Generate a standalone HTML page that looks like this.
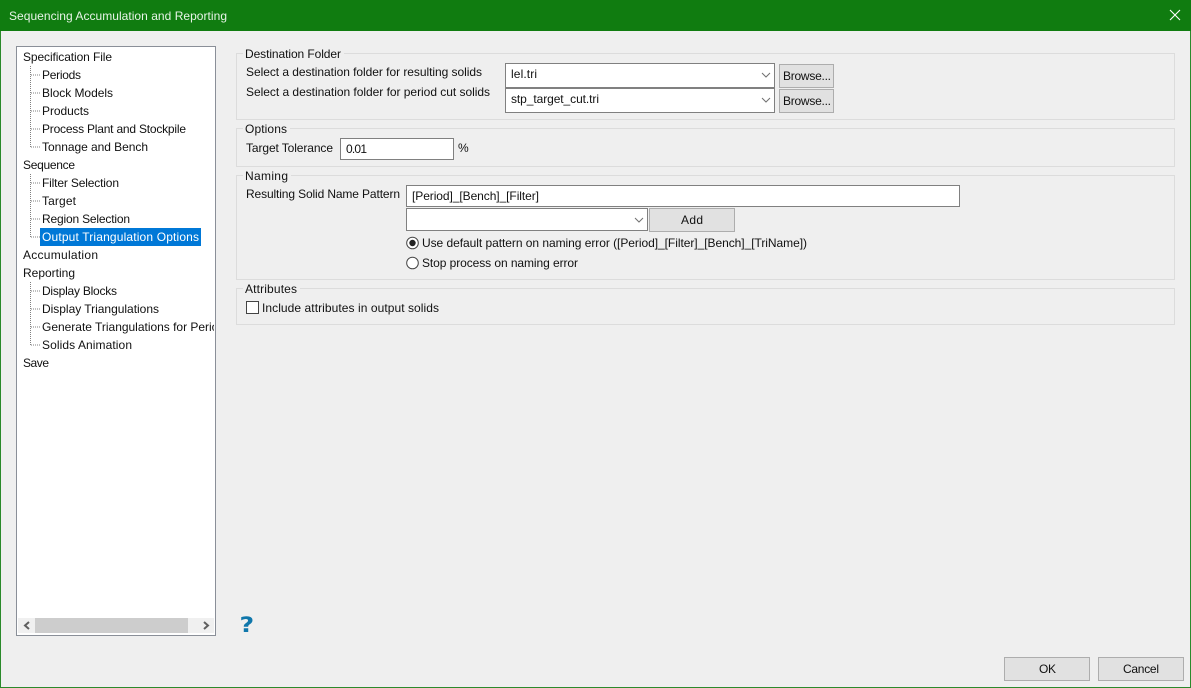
<!DOCTYPE html>
<html><head><meta charset="utf-8"><title>Sequencing Accumulation and Reporting</title>
<style>
html,body{margin:0;padding:0;background:#efefef;width:1191px;height:688px;overflow:hidden}
svg{display:block}
text{font-family:"Liberation Sans",sans-serif;font-size:12px;fill:#111;white-space:pre}
.f{fill:none;stroke:#dcdcdc;stroke-width:1}
.b{fill:#fff;stroke:#808080;stroke-width:1}
.btn{fill:#e1e1e1;stroke:#adadad;stroke-width:1}
.chev{fill:none;stroke:#707070;stroke-width:1}
.dot{stroke:#808080;stroke-width:1;stroke-dasharray:1 1;fill:none}
</style></head><body>
<svg width="1191" height="688" viewBox="0 0 1191 688" xmlns="http://www.w3.org/2000/svg">
<defs><clipPath id="tc"><rect x="17" y="47" width="197" height="570"/></clipPath></defs>
<rect x="0" y="0" width="1191" height="688" fill="#efefef"/>
<rect x="0.5" y="0.5" width="1190" height="687" fill="none" stroke="#2b8a2b"/>
<rect x="0" y="0" width="1191" height="31" fill="#107c10"/>
<text x="9" y="20" textLength="218" style="fill:#e8f4e8">Sequencing Accumulation and Reporting</text>
<path d="M1170 10L1180 20M1180 10L1170 20" stroke="#fff" stroke-width="1.1" fill="none"/>

<rect x="16.5" y="46.5" width="199" height="589" fill="#fff" stroke="#8a8f98"/>
<path class="dot" d="M30.5 66V147M31 75H40M31 93H40M31 111H40M31 129H40M31 147H40"/>
<path class="dot" d="M30.5 174V237M31 183H40M31 201H40M31 219H40M31 237H40"/>
<path class="dot" d="M30.5 282V345M31 291H40M31 309H40M31 327H40M31 345H40"/>
<rect x="40" y="228" width="161" height="18" fill="#0078d7"/>
<g clip-path="url(#tc)">
<text x="23" y="61" textLength="89">Specification File</text>
<text x="42" y="79" textLength="39">Periods</text>
<text x="42" y="97" textLength="71">Block Models</text>
<text x="42" y="115" textLength="47">Products</text>
<text x="42" y="133" textLength="144">Process Plant and Stockpile</text>
<text x="42" y="151" textLength="106">Tonnage and Bench</text>
<text x="23" y="169" textLength="52">Sequence</text>
<text x="42" y="187" textLength="77">Filter Selection</text>
<text x="42" y="205" textLength="34">Target</text>
<text x="42" y="223" textLength="88">Region Selection</text>
<text x="42" y="241" textLength="157" style="fill:#fff">Output Triangulation Options</text>
<text x="23" y="259" textLength="75">Accumulation</text>
<text x="23" y="277" textLength="52">Reporting</text>
<text x="42" y="295" textLength="75">Display Blocks</text>
<text x="42" y="313" textLength="117">Display Triangulations</text>
<text x="42" y="331" textLength="183">Generate Triangulations for Period</text>
<text x="42" y="349" textLength="90">Solids Animation</text>
<text x="23" y="367" textLength="26">Save</text>
</g>
<rect x="18" y="618" width="196" height="15" fill="#f0f0f0"/>
<rect x="35" y="618" width="153" height="15" fill="#cdcdcd"/>
<path d="M29 622L25 625.5L29 629" fill="none" stroke="#606060" stroke-width="2"/>
<path d="M204 622L208 625.5L204 629" fill="none" stroke="#606060" stroke-width="2"/>
<text transform="translate(239.5,632) scale(1.2,1)" style="font-family:'DejaVu Sans',sans-serif;font-weight:bold;font-size:21px;fill:#0f77ab">?</text>

<rect class="f" x="236.5" y="53.5" width="938" height="66"/>
<rect x="243" y="50" width="101" height="8" fill="#efefef"/>
<text x="245" y="58" textLength="96">Destination Folder</text>
<text x="246" y="76" textLength="236">Select a destination folder for resulting solids</text>
<text x="246" y="96" textLength="244">Select a destination folder for period cut solids</text>
<rect class="b" x="505.5" y="63.5" width="269" height="24"/>
<rect class="b" x="505.5" y="88.5" width="269" height="24"/>
<text x="511" y="78" textLength="26">lel.tri</text>
<text x="511" y="103" textLength="88">stp_target_cut.tri</text>
<path class="chev" d="M762 73L766 77L770 73"/>
<path class="chev" d="M762 98L766 102L770 98"/>
<rect class="btn" x="779.5" y="64.5" width="54" height="23"/>
<rect class="btn" x="779.5" y="89.5" width="54" height="23"/>
<text x="783" y="80" textLength="48">Browse...</text>
<text x="783" y="105" textLength="48">Browse...</text>

<rect class="f" x="236.5" y="128.5" width="938" height="38"/>
<rect x="243" y="125" width="47" height="8" fill="#efefef"/>
<text x="245" y="133" textLength="42">Options</text>
<text x="246" y="152" textLength="87">Target Tolerance</text>
<rect class="b" x="340.5" y="138.5" width="113" height="21"/>
<text x="346" y="153" textLength="21">0.01</text>
<text x="458" y="152" textLength="9">%</text>

<rect class="f" x="236.5" y="175.5" width="938" height="104"/>
<rect x="243" y="172" width="48" height="8" fill="#efefef"/>
<text x="245" y="180" textLength="43">Naming</text>
<text x="246" y="198" textLength="154">Resulting Solid Name Pattern</text>
<rect class="b" x="406.5" y="185.5" width="553" height="21"/>
<text x="412" y="200" textLength="127">[Period]_[Bench]_[Filter]</text>
<rect class="b" x="406.5" y="208.5" width="241" height="22"/>
<path class="chev" d="M635 218L639 222L643 218"/>
<rect class="btn" x="649.5" y="208.5" width="85" height="23"/>
<text x="681" y="224" textLength="22">Add</text>
<circle cx="412.5" cy="243" r="5.8" fill="#fff" stroke="#444"/>
<circle cx="412.5" cy="243" r="3.2" fill="#222"/>
<text x="422" y="247" textLength="385">Use default pattern on naming error ([Period]_[Filter]_[Bench]_[TriName])</text>
<circle cx="412.5" cy="263" r="5.8" fill="#fff" stroke="#444"/>
<text x="422" y="267" textLength="156">Stop process on naming error</text>

<rect class="f" x="236.5" y="288.5" width="938" height="36"/>
<rect x="243" y="285" width="57" height="8" fill="#efefef"/>
<text x="245" y="293" textLength="52">Attributes</text>
<rect x="246.5" y="301.5" width="12" height="12" fill="#fff" stroke="#444"/>
<text x="262" y="312" textLength="177">Include attributes in output solids</text>

<rect class="btn" x="1004.5" y="657.5" width="85" height="23"/>
<text x="1039" y="673" textLength="17">OK</text>
<rect class="btn" x="1098.5" y="657.5" width="85" height="23"/>
<text x="1123" y="673" textLength="36">Cancel</text>
</svg>
</body></html>
